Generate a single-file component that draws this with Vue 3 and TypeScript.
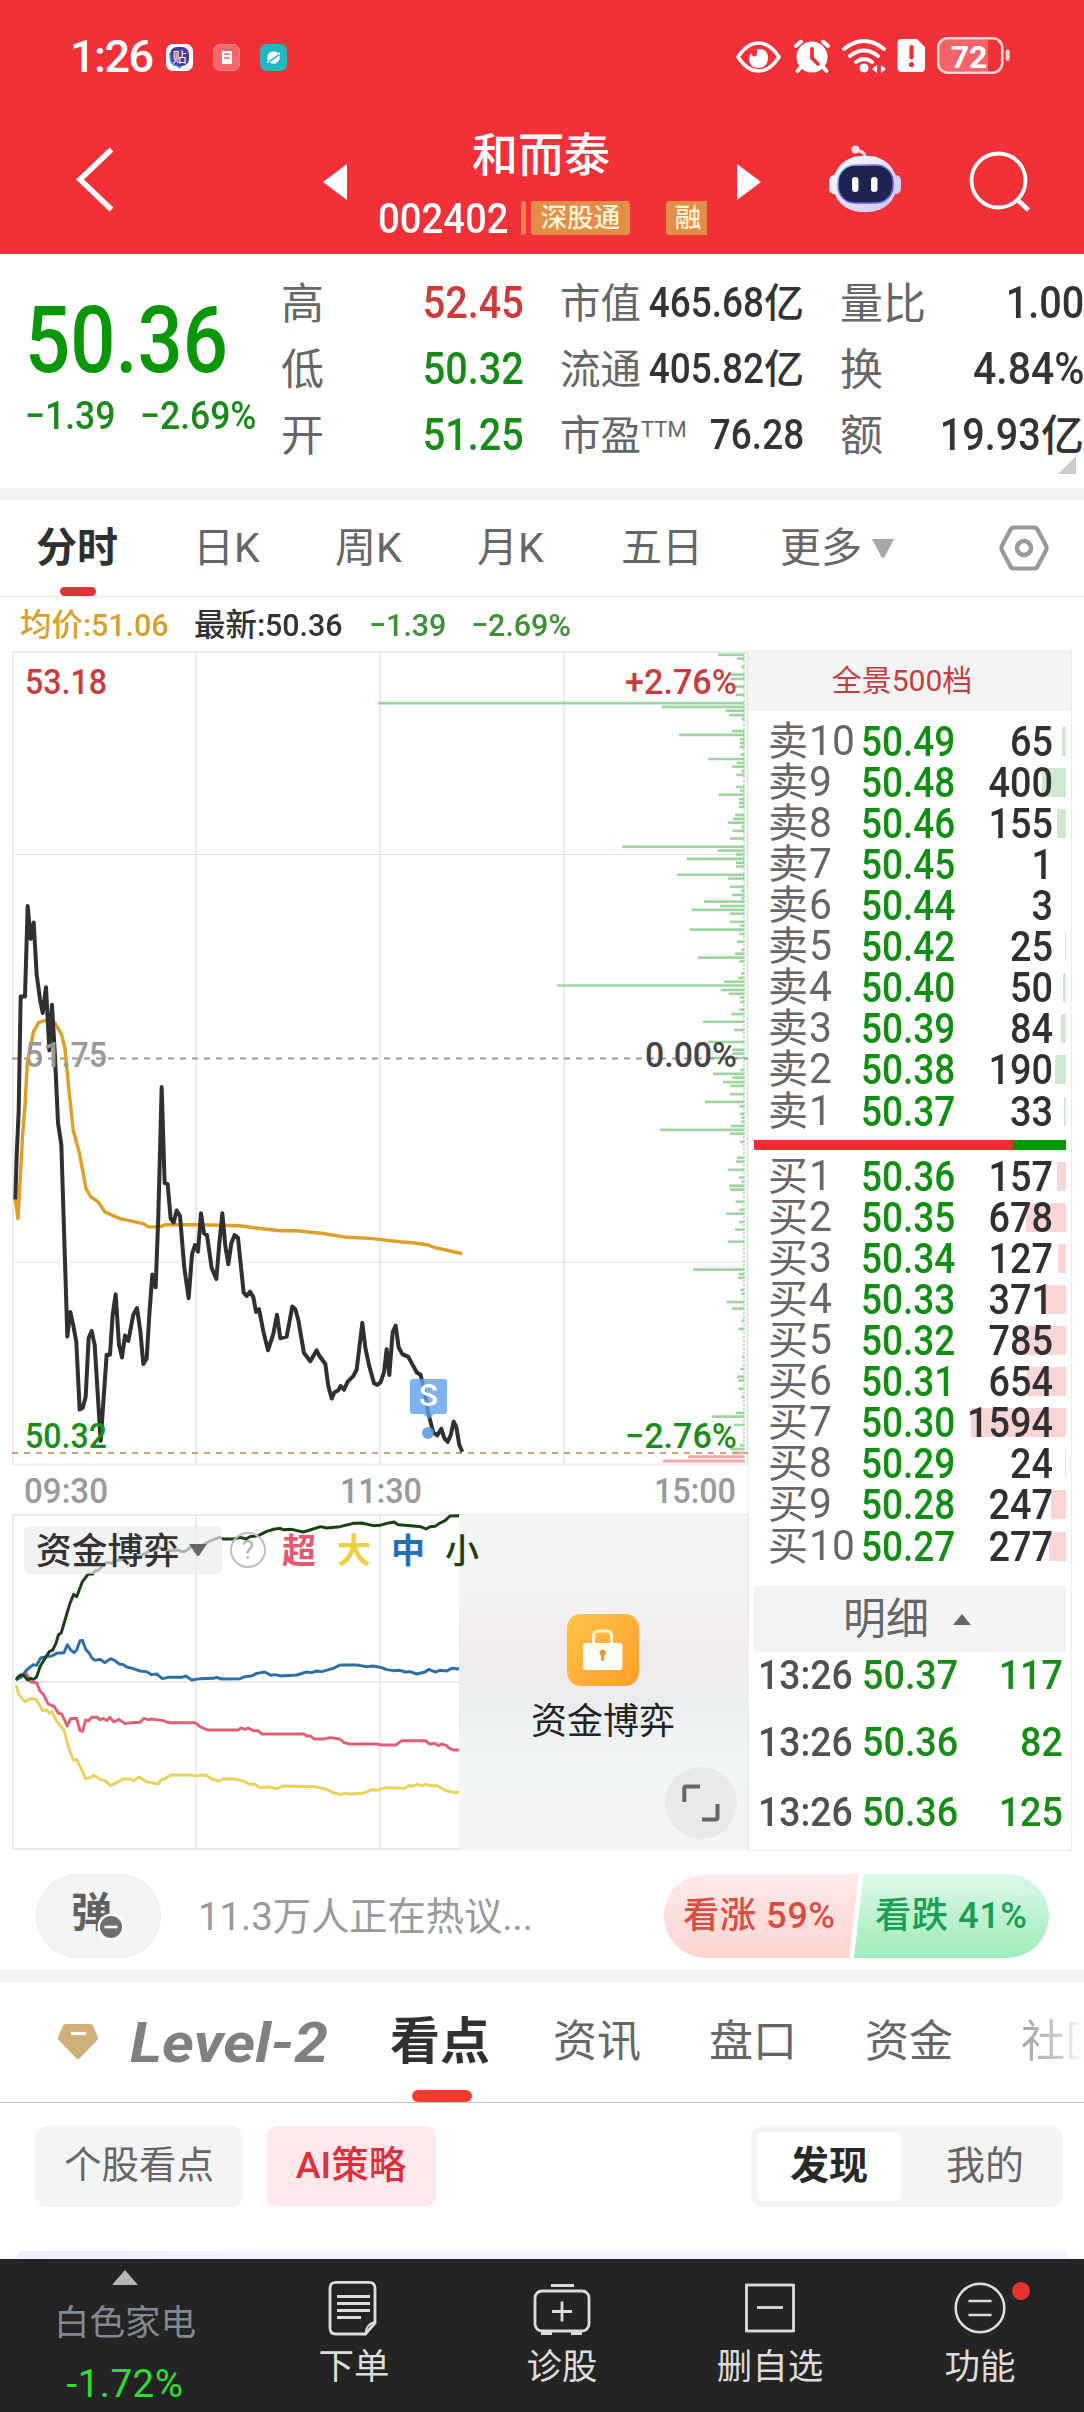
<script setup lang="ts">
interface Level { label: string; price: string; vol: number }
interface Bar { y: number; x: number }

const sells: Level[] = [
  ['卖10', '50.49', 65], ['卖9', '50.48', 400], ['卖8', '50.46', 155], ['卖7', '50.45', 1], ['卖6', '50.44', 3],
  ['卖5', '50.42', 25], ['卖4', '50.40', 50], ['卖3', '50.39', 84], ['卖2', '50.38', 190], ['卖1', '50.37', 33],
].map(([label, price, vol]) => ({ label, price, vol }) as Level)

const buys: Level[] = [
  ['买1', '50.36', 157], ['买2', '50.35', 678], ['买3', '50.34', 127], ['买4', '50.33', 371], ['买5', '50.32', 785],
  ['买6', '50.31', 654], ['买7', '50.30', 1594], ['买8', '50.29', 24], ['买9', '50.28', 247], ['买10', '50.27', 277],
].map(([label, price, vol]) => ({ label, price, vol }) as Level)

const MAX_VOL = 1594
const depth = (v: number): string => `${v < 10 ? 0 : Math.max(1, Math.round((v / MAX_VOL) * 95))}px`

const trades = [
  { t: '13:26', p: '50.37', v: '117' },
  { t: '13:26', p: '50.36', v: '82' },
  { t: '13:26', p: '50.36', v: '125' },
]

// Order-book density bars: y and left edge, all ending at the right axis
const greenBars: Bar[] = ([
  [27, 1074], [34, 1130], [49, 1144], [63, 1110], [71, 1112], [85, 1115], [100, 1128], [115, 54], [122, 905], [129, 1097],
  [137, 1107], [144, 1144], [166, 1116], [173, 957], [181, 1140], [188, 1140], [195, 1138], [209, 1141], [217, 1045],
  [224, 1130], [231, 1116], [239, 1144], [246, 1129], [268, 1128], [275, 1140], [282, 1076], [290, 1137], [297, 1137],
  [304, 1137], [319, 1125], [326, 1119], [333, 1104], [341, 1144], [348, 1117], [362, 1110], [377, 786], [384, 1072],
  [391, 1128], [399, 980], [406, 1128], [413, 1128], [428, 951], [435, 1104], [450, 1110], [457, 1144], [465, 1116],
  [471, 1144], [477, 1032], [485, 1080], [492, 995], [499, 1110], [514, 1110], [521, 1140], [528, 990], [536, 1138],
  [550, 1131], [565, 1144], [572, 1125], [579, 1014], [586, 1138], [608, 1144], [616, 1134], [623, 1092], [630, 591],
  [638, 1083], [645, 1106], [652, 1140], [660, 1140], [674, 1138], [682, 1114], [696, 1029], [711, 1122], [733, 1044],
  [747, 1116], [754, 1116], [762, 1040], [784, 1141], [791, 1059], [798, 1117], [806, 1089], [813, 1110], [828, 1110],
  [842, 1035], [850, 1138], [864, 1140], [871, 1144], [878, 1144], [886, 1113], [893, 900], [900, 1110], [915, 1140],
  [944, 1131], [951, 1128], [966, 1104], [980, 1137], [988, 1144], [995, 1107], [1002, 1110], [1024, 1127], [1039, 1138],
  [1046, 1098], [1061, 1137], [1075, 1125], [1097, 1104], [1148, 999], [1156, 1137], [1163, 1134], [1185, 1141],
  [1192, 1144], [1207, 1100], [1219, 1116], [1241, 1144], [1256, 1135], [1307, 1146], [1329, 1141], [1343, 1131],
  [1350, 1135], [1365, 1135], [1380, 1144], [1409, 1127], [1416, 1056], [1431, 1122], [1468, 1140], [1475, 1110],
] as [number, number][]).map(([y, x]) => ({ y, x }))
const redBars: Bar[] = [{ y: 1482, x: 1120 }, { y: 1489, x: 984 }, { y: 1497, x: 909 }]

const priceLine = '46,1020 50,940 56,860 62,650 75,650 83,485 92,545 101,515 110,610 120,655 128,680 138,633 148,748 156,665 165,760 174,880 184,920 202,1270 211,1225 220,1250 229,1280 239,1403 248,1400 257,1380 266,1272 275,1260 284,1285 302,1460 320,1303 330,1303 338,1230 347,1193 357,1285 366,1308 375,1268 385,1278 400,1230 411,1218 421,1260 430,1320 440,1310 448,1230 457,1157 467,1180 475,1050 485,815 494,990 503,992 512,1055 521,1062 530,1040 540,1050 553,1145 566,1200 576,1120 585,1103 594,1115 603,1045 612,1082 621,1085 635,1145 649,1165 658,1100 667,1045 676,1105 685,1138 694,1100 704,1085 714,1090 731,1190 740,1196 750,1188 760,1198 768,1225 777,1220 790,1260 804,1295 820,1265 831,1230 841,1273 860,1270 877,1215 886,1220 895,1240 912,1300 931,1315 950,1295 958,1305 976,1320 985,1360 995,1383 1003,1372 1015,1368 1022,1360 1032,1367 1043,1352 1060,1342 1070,1330 1078,1290 1087,1245 1096,1290 1107,1322 1122,1355 1132,1358 1142,1353 1152,1335 1160,1293 1168,1340 1178,1262 1187,1250 1196,1290 1207,1302 1225,1307 1250,1335 1262,1340 1275,1375 1285,1410 1300,1445 1312,1450 1324,1438 1333,1455 1343,1462 1352,1450 1361,1425 1369,1435 1378,1468 1387,1480'
const avgLine = '46,1020 54,1055 60,990 68,900 75,850 82,770 92,740 100,715 116,697 135,694 150,693 165,698 185,720 195,745 205,810 220,895 238,935 258,1000 272,1015 295,1025 315,1043 360,1055 430,1064 445,1070 480,1070 495,1066 600,1066 720,1068 780,1073 840,1077 890,1077 970,1082 1040,1089 1110,1091 1200,1097 1240,1099 1285,1103 1305,1108 1330,1111 1387,1119'

const fundLines = [
  { c: '#e8d25a', p: '48,555 56,583 75,605 92,596 108,598 128,632 140,630 148,640 156,635 170,664 192,690 205,740 220,780 230,778 257,836 268,834 282,826 300,838 315,842 332,857 350,848 368,837 390,837 402,842 418,831 438,845 475,852 483,840 495,836 512,825 570,825 585,828 605,825 620,826 635,837 657,843 670,836 705,837 735,845 748,853 765,853 778,863 805,861 830,866 850,858 945,860 980,868 1000,878 1022,884 1035,880 1050,882 1090,880 1115,869 1135,870 1155,863 1215,865 1225,857 1240,858 1252,853 1265,857 1278,853 1290,857 1312,857 1330,868 1345,874 1368,878 1378,875' },
  { c: '#df6074', p: '62,525 80,522 92,546 110,548 120,573 130,583 145,612 163,620 175,640 185,642 202,678 212,656 230,655 240,692 248,694 257,660 265,663 275,652 292,652 300,660 310,655 320,662 330,652 342,666 357,658 375,671 395,668 420,667 432,655 445,659 455,657 490,662 505,668 585,668 600,680 622,690 715,690 722,684 735,688 745,684 760,692 775,692 785,702 912,702 920,708 932,708 942,717 970,717 990,713 1020,717 1032,728 1050,732 1130,732 1145,735 1188,735 1205,722 1278,722 1288,732 1305,730 1315,737 1325,732 1338,736 1350,746 1360,750 1378,750' },
  { c: '#2c6fa8', p: '48,540 65,530 80,510 100,494 110,496 122,474 140,470 155,468 170,460 192,458 202,434 212,450 222,458 230,450 240,422 247,421 257,448 268,460 275,473 285,481 300,478 315,488 332,476 345,482 358,492 370,494 380,501 400,506 420,513 440,515 455,524 470,522 487,536 505,532 545,532 558,528 575,540 600,536 640,535 650,532 665,537 720,536 735,530 755,528 770,520 795,516 812,526 825,524 845,528 890,525 920,516 935,518 950,513 965,515 1000,505 1020,495 1070,495 1100,500 1120,498 1145,503 1160,509 1180,512 1200,511 1215,516 1230,515 1250,522 1275,516 1287,508 1305,516 1320,511 1340,513 1355,505 1378,507' },
  { c: '#17420f', p: '48,540 55,530 62,525 72,527 83,540 92,535 102,538 110,530 120,500 135,475 148,455 158,450 168,430 175,405 184,398 195,360 210,310 221,283 230,290 247,245 265,222 278,222 285,213 295,211 305,200 320,187 335,190 345,182 375,178 400,172 425,166 445,155 480,142 510,152 530,150 552,156 575,140 600,140 630,123 658,112 670,117 700,117 720,112 738,117 750,110 775,107 800,94 825,87 840,85 850,89 875,88 910,96 930,90 962,80 980,84 1020,80 1060,70 1085,69 1120,77 1140,76 1160,70 1182,66 1195,74 1240,78 1262,80 1278,87 1290,80 1305,79 1318,70 1335,62 1350,48 1378,47' },
]
</script>

<template>
  <div class="page">
    <header class="head">
      <div class="status">
        <span class="clock">1:26</span>
        <svg class="apps" width="121" height="27" viewBox="0 0 121 27">
          <rect width="27" height="27" rx="7" fill="#fff" />
          <rect x="4" y="3" width="19" height="19" rx="7" fill="#4a3aa0" />
          <path d="M11 22l2.500 3 2.500-3z" fill="#3c8fe0" />
          <path d="M4 9q0 12 8 13" stroke="#2f8bd8" stroke-width="1.500" fill="none" />
          <text x="13.500" y="17.500" font-size="14" text-anchor="middle" fill="#fff" class="cjk">贴</text>
          <rect x="47.500" y=".5" width="26" height="26" rx="6.500" fill="#f2686b" stroke="#f58588" />
          <path d="M56 7h10v13h-10z" fill="#fff" />
          <path d="M58 10h6M58 14h6" stroke="#f2686b" stroke-width="1.300" />
          <rect x="94" width="27" height="27" rx="7" fill="#1fb8bf" />
          <circle cx="107.500" cy="13.500" r="6.200" fill="#fff" />
          <path d="M101 18q7-2 13-9" stroke="#1fb8bf" stroke-width="1.500" fill="none" />
          <path d="M101 18l2-1M114 9l-2 1" stroke="#fff" stroke-width="1.500" />
        </svg>
        <svg class="sys" width="276" height="40" viewBox="735 35 276 40" fill="none" stroke="#fff">
          <path d="M738 57q9-14 20.500-14t20.500 14q-9 14-20.500 14t-20.500-14z" stroke-width="3.600" stroke-linejoin="round" />
          <path d="M757 49q11-1 11 9 0 9-9 10-9 0-10-8 0-4 2-7 1 4 4 3.500 3-1 2-7.500z" fill="#fff" stroke="none" />
          <circle cx="812" cy="57" r="15.500" fill="#fff" stroke="none" />
          <path d="M796 46l5-4.500M828 46l-5-4.500" stroke-width="4" stroke-linecap="round" />
          <path d="M801 67l-3.500 4M823 67l3.500 4" stroke-width="4" stroke-linecap="round" />
          <path d="M812 49v9l6 6" stroke="#f13037" stroke-width="3.800" stroke-linecap="round" />
          <path d="M844 49q20-16 40 0M850 56q14-11 28 0M856 62q8-6 16 0" stroke-width="3.800" stroke-linecap="round" />
          <circle cx="864" cy="68" r="4.500" fill="#fff" stroke="none" />
          <path d="M876.500 66v6l-3.500-3zM881.500 66v6l3.500-3z" fill="#fff" stroke="#fff" stroke-width="1.200" />
          <path d="M901 39h16l8 8v21a4 4 0 0 1-4 4h-20a3.500 3.500 0 0 1-3.500-4V43a4 4 0 0 1 3.500-4z" fill="#fff" stroke="none" />
          <path d="M911.500 47v10.500" stroke="#f13037" stroke-width="4.200" stroke-linecap="round" />
          <circle cx="911.500" cy="64.500" r="2.600" fill="#f13037" stroke="none" />
          <path d="M988 39.500H948q-8.500 0-8.500 8.500v15q0 8.500 8.500 8.500h40z" fill="#f46468" stroke="none" />
          <rect x="938.200" y="38.200" width="64" height="34.500" rx="9.500" stroke="#ffd9da" stroke-width="2.600" />
          <path d="M1007.700 51.500v7.500" stroke="#ffd9da" stroke-width="4" stroke-linecap="round" />
          <text x="969" y="67.500" text-anchor="middle" font-size="32" font-weight="700" fill="#fff" stroke="none" class="num">72</text>
        </svg>
      </div>
      <div class="nav">
        <svg class="back" width="40" height="68" viewBox="76 146 40 68"><path d="M111.500 149.500L80 179.500l31.500 30" fill="none" stroke="#fff" stroke-width="5.500" /></svg>
        <svg class="prev" width="24" height="36"><path d="M24 0v36L0 18z" fill="#fff" /></svg>
        <div class="title">
          <div class="name">和而泰</div>
          <div class="sub">
            <span class="code n">002402</span>
            <i class="sliver"></i>
            <span class="tag">深股通</span>
            <span class="tag short">融</span>
          </div>
        </div>
        <svg class="next" width="24" height="36"><path d="M0 0v36l24-18z" fill="#fff" /></svg>
        <svg class="robot" width="74" height="68" viewBox="828 145 74 68">
          <defs>
            <linearGradient id="hd" x1="0" y1="0" x2="1" y2="1"><stop offset="0" stop-color="#fff" /><stop offset="1" stop-color="#c9c4f4" /></linearGradient>
            <linearGradient id="rim" x1="0" y1="0" x2="1" y2="1"><stop offset="0" stop-color="#9fe3f5" /><stop offset=".5" stop-color="#7a3fe0" /><stop offset="1" stop-color="#6f6bff" /></linearGradient>
          </defs>
          <path d="M857 151q9-1 9 12" fill="none" stroke="#ead9f2" stroke-width="3" />
          <circle cx="855.500" cy="149.500" r="4" fill="#f6e3ee" />
          <rect x="829" y="175" width="12" height="19" rx="5.500" fill="#f3ecfa" />
          <rect x="889" y="175" width="12" height="19" rx="5.500" fill="#d8d0f3" />
          <rect x="833" y="156" width="64" height="56" rx="28" fill="url(#hd)" />
          <rect x="838" y="165" width="55" height="38" rx="17" fill="#1b2550" stroke="url(#rim)" stroke-width="1.500" />
          <rect x="852" y="177" width="6.500" height="15" rx="3.200" fill="#fff" /><rect x="871" y="177" width="6.500" height="15" rx="3.200" fill="#fff" />
        </svg>
        <svg class="search" width="62" height="62" viewBox="969 151 62 62" fill="none" stroke="#fff" stroke-width="3.800"><circle cx="998.500" cy="180.500" r="27" /><path d="M1017 199.500l11.500 10.500" stroke-width="4.500" /></svg>
      </div>
    </header>

    <section class="quote">
      <div class="last">
        <div class="big n">50.36</div>
        <div class="chg"><span class="n">−1.39</span><span class="n">−2.69%</span></div>
      </div>
      <div class="stat c1">
        <div><label>高</label><b class="n red">52.45</b></div>
        <div><label>低</label><b class="n green">50.32</b></div>
        <div><label>开</label><b class="n green">51.25</b></div>
      </div>
      <div class="stat c2">
        <div><label>市值</label><b class="n">465.68</b><b class="yi">亿</b></div>
        <div><label>流通</label><b class="n">405.82</b><b class="yi">亿</b></div>
        <div><label>市盈<sup>TTM</sup></label><b class="n">76.28</b></div>
      </div>
      <div class="stat c3">
        <div><label>量比</label><b class="n">1.00</b></div>
        <div><label>换</label><b class="n pct">4.84%</b></div>
        <div><label>额</label><b class="n">19.93</b><b class="yi">亿</b></div>
      </div>
      <svg class="corner" width="18" height="18"><path d="M18 0v18H0z" fill="#ccc" /></svg>
    </section>

    <div class="band"></div>

    <nav class="periods">
      <span class="on">分时</span><span class="p2">日K</span><span class="p3">周K</span><span class="p4">月K</span><span class="p5">五日</span><span class="p6">更多</span>
      <svg class="caret" width="22" height="19"><path d="M0 0h22L12.500 18q-1.500 2-3 0z" fill="#a8a8a8" /></svg>
      <svg class="hex" width="50" height="48" viewBox="999 524 50 48" fill="none" stroke="#999" stroke-width="4.200" stroke-linejoin="round"><path d="M1013.500 527.500h21q2 0 3 2l8.500 16q1 2.500 0 5l-8.500 16q-1 2-3 2h-21q-2 0-3-2l-8.500-16q-1-2.500 0-5l8.500-16q1-2 3-2z" /><circle cx="1024" cy="548" r="7" stroke-width="4.500" /></svg>
    </nav>

    <div class="info">
      <span class="avg">均价:<i class="n">51.06</i></span>
      <span class="new">最新:<i class="n">50.36</i></span>
      <i class="n d1">−1.39</i>
      <i class="n d2">−2.69%</i>
    </div>

    <section class="main">
      <svg class="charts" width="749" height="1207" viewBox="0 645 749 1207">
        <defs>
          <linearGradient id="fog" x1="0" y1="0" x2="0" y2="1">
            <stop offset="0" stop-color="#f5f5f5" /><stop offset=".22" stop-color="#f4f3f4" /><stop offset=".42" stop-color="#f1eaec" />
            <stop offset=".55" stop-color="#e9edee" /><stop offset=".74" stop-color="#f2f6f7" /><stop offset="1" stop-color="#f5f3f6" />
          </linearGradient>
          <linearGradient id="gold" x1="0" y1="0" x2="1" y2="1"><stop offset="0" stop-color="#ffc548" /><stop offset="1" stop-color="#ff9d2a" /></linearGradient>
        </defs>
        <g stroke="#ebebeb" stroke-width="2" fill="none">
          <path d="M13 652V1465M196 652V1465M380 652V1465M564 652V1465M747 652V1465" />
          <path d="M12 652H748M12 1464.500H748" /><path d="M12 854.500H748M12 1262H748" stroke-width="1" stroke="#e2e2e2" />
          <path d="M13 1515V1850M196 1515V1850M380 1515V1850M12 1515H748M12 1682H748M12 1849H748M747 1515V1850" />
        </g>
        <path d="M744 652V1464" stroke="#bfe3c0" stroke-width="2" stroke-dasharray="2.500 1.500" />
        <g transform="translate(360 640) scale(.33333 .5485)">
          <path v-for="b in greenBars" :key="b.y" :d="`M${b.x} ${b.y}H1153`" stroke="#9dd59f" stroke-width="4.800" />
          <path v-for="b in redBars" :key="b.y" :d="`M${b.x} ${b.y}H1153`" stroke="#f2a9a9" stroke-width="5.500" />
        </g>
        <path d="M12 1058.500H748" stroke="#999" stroke-width="2" stroke-dasharray="6 6" />
        <path d="M12 1453H748" stroke="#c1a37e" stroke-width="2" stroke-dasharray="6 6" />
        <g transform="translate(0 640) scale(.33333 .5485)" fill="none" stroke-linejoin="round">
          <polyline :points="avgLine" stroke="#dd9f26" stroke-width="3.400" vector-effect="non-scaling-stroke" />
          <polyline :points="priceLine" stroke="#303030" stroke-width="4" vector-effect="non-scaling-stroke" />
        </g>
        <g class="num axis">
          <text x="25" y="694" textLength="82" lengthAdjust="spacingAndGlyphs" fill="#c93c3c">53.18</text>
          <text x="25" y="1067" textLength="82" lengthAdjust="spacingAndGlyphs" fill="#999">51.75</text>
          <text x="25" y="1448" textLength="82" lengthAdjust="spacingAndGlyphs" fill="#1a8c1a">50.32</text>
          <text x="625" y="694" textLength="112" lengthAdjust="spacingAndGlyphs" fill="#c93c3c">+2.76%</text>
          <text x="645" y="1067" textLength="92" lengthAdjust="spacingAndGlyphs" fill="#444">0.00%</text>
          <text x="625" y="1448" textLength="112" lengthAdjust="spacingAndGlyphs" fill="#1a8c1a">−2.76%</text>
          <text x="24" y="1502.500" textLength="84" lengthAdjust="spacingAndGlyphs" fill="#999">09:30</text>
          <text x="340" y="1502.500" textLength="82" lengthAdjust="spacingAndGlyphs" fill="#999">11:30</text>
          <text x="654" y="1502.500" textLength="82" lengthAdjust="spacingAndGlyphs" fill="#999">15:00</text>
        </g>
        <path d="M413 1379h31q3 0 3 3v29q0 3-3 3h-10l-5 5-6-5h-10q-3 0-3-3v-29q0-3 3-3z" fill="#5f9fee" opacity=".8" />
        <circle cx="428" cy="1433" r="6" fill="#5a9bec" opacity=".9" />
        <text x="428.500" y="1406" font-size="31" font-weight="500" text-anchor="middle" fill="#fff" class="num">S</text>

        <g transform="translate(0 1500) scale(.33333)" fill="none" stroke-linejoin="round">
          <polyline v-for="l in fundLines" :key="l.c" :points="l.p" :stroke="l.c" stroke-width="8.800" />
        </g>
        <rect x="459" y="1515" width="288" height="335" fill="url(#fog)" />
        <rect x="24" y="1526" width="198" height="48" rx="6" fill="#ececec" opacity=".7" />
        <g class="cjk" font-weight="500">
          <text x="36" y="1563.500" font-size="35.800" fill="#333">资金博弈</text>
          <text x="282" y="1563" font-size="34" font-weight="700" fill="#e5596b">超</text>
          <text x="337" y="1563" font-size="34" font-weight="700" fill="#ecd03f">大</text>
          <text x="391" y="1563" font-size="34" font-weight="700" fill="#216fb5">中</text>
          <text x="445" y="1563" font-size="34" fill="#17420f">小</text>
        </g>
        <path d="M189 1544h18l-7.500 11q-1.500 2-3 0z" fill="#666" />
        <circle cx="248" cy="1550" r="17" fill="none" stroke="#bdbdbd" stroke-width="2" />
        <text x="248" y="1559" font-size="26" text-anchor="middle" fill="#b5b5b5" class="num">?</text>
        <rect x="567" y="1614" width="72" height="72" rx="14" fill="url(#gold)" />
        <path d="M593.500 1645v-9q0-5 5-5h8q5 0 5 5v9" fill="none" stroke="#fff3cf" stroke-width="3.200" />
        <rect x="583" y="1643" width="39.500" height="27" rx="3" fill="#fffdf8" />
        <path d="M602.700 1649.500a3.400 3.400 0 0 1 1.700 6.300v4.500q-1.700 1.500-3.400 0v-4.500a3.400 3.400 0 0 1 1.700-6.300z" fill="#e6a23a" />
        <text x="531" y="1733.500" font-size="36" fill="#222" class="cjk">资金博弈</text>
        <circle cx="701" cy="1803" r="36" fill="#e9e9e9" />
        <path d="M684.300 1802v-13.500q0-2 2-2H700M702 1819.500h13.500q2 0 2-2V1804" fill="none" stroke="#666" stroke-width="4" />
      </svg>

      <aside class="book">
        <div class="panorama">全景500档</div>
        <div class="levels sell">
          <div v-for="r in sells" :key="r.label" class="row">
            <i class="depth" :style="{ width: depth(r.vol) }"></i>
            <span class="lb">{{ r.label.slice(0, 1) }}<em class="n">{{ r.label.slice(1) }}</em></span>
            <span class="pr n">{{ r.price }}</span><span class="vo n">{{ r.vol }}</span>
          </div>
        </div>
        <div class="ratio"><i></i></div>
        <div class="levels buy">
          <div v-for="r in buys" :key="r.label" class="row">
            <i class="depth" :style="{ width: depth(r.vol) }"></i>
            <span class="lb">{{ r.label.slice(0, 1) }}<em class="n">{{ r.label.slice(1) }}</em></span>
            <span class="pr n">{{ r.price }}</span><span class="vo n">{{ r.vol }}</span>
          </div>
        </div>
        <div class="detail">明细<svg width="18" height="11"><path d="M9 0l9 11H0z" fill="#666" /></svg></div>
        <div v-for="(t, i) in trades" :key="i" class="trade" :class="'t' + i">
          <span class="tm n">{{ t.t }}</span><span class="tp n">{{ t.p }}</span><span class="tv n">{{ t.v }}</span>
        </div>
      </aside>
    </section>

    <section class="talk">
      <div class="danmu">
        弹
        <svg width="28" height="28"><circle cx="14" cy="14" r="13.500" fill="#fff" /><circle cx="14" cy="14" r="11" fill="#707070" /><path d="M7.500 14h13" stroke="#fff" stroke-width="2.600" /></svg>
      </div>
      <div class="hot">11.3万人正在热议...</div>
      <div class="vote">
        <svg width="385" height="84" viewBox="0 0 385 84">
          <defs>
            <linearGradient id="up" x1="0" y1="0" x2="0" y2="1"><stop offset="0" stop-color="#feeae8" /><stop offset="1" stop-color="#fdd4cf" /></linearGradient>
            <linearGradient id="dn" x1="0" y1="0" x2="0" y2="1"><stop offset="0" stop-color="#dcf9e7" /><stop offset="1" stop-color="#9eecbd" /></linearGradient>
          </defs>
          <path d="M42 0H194.500L185 84H42A42 42 0 0 1 42 0z" fill="url(#up)" />
          <path d="M199.500 0H343A42 42 0 0 1 343 84H190z" fill="url(#dn)" />
        </svg>
        <span class="v1">看涨 59%</span><span class="v2">看跌 41%</span>
      </div>
    </section>

    <div class="band b2"></div>

    <nav class="tabs">
      <svg class="gem" width="42" height="37" viewBox="0 0 42 37"><path d="M9 1h24q2 0 3 1.500l5 12q.5 1.500-.8 2.800L23 35q-2 1.800-4 0L1.800 17.300Q.5 16 1 14.500l5-12Q7 1 9 1z" fill="#d2b079" /><path d="M14 10.500h15" stroke="#fff" stroke-width="3.200" /></svg>
      <span class="lv"><i>Level-2</i></span>
      <span class="cur">看点</span><span class="q2">资讯</span><span class="q3">盘口</span><span class="q4">资金</span><span class="q5">社区</span>
    </nav>

    <section class="filters">
      <span class="chip">个股看点</span>
      <span class="chip ai">AI策略</span>
      <div class="seg"><span class="sel">发现</span><span>我的</span></div>
    </section>
    <div class="peek"></div>

    <footer class="dock">
      <div class="idx">
        <svg width="26" height="15"><path d="M13 0l13 15H0z" fill="#b5b5b5" /></svg>
        <span>白色家电</span>
        <b class="num">-1.72%</b>
      </div>
      <div class="it i1">
        <svg width="52" height="58" viewBox="0 0 52 58" fill="none" stroke="#dcdcdc" stroke-width="2.800"><path d="M8 3.400h33q6 0 6 6v34.500L37.500 55H8q-6 0-6-6V9.400q0-6 6-6z" /><path d="M47 43q-9 2-9.500 12" stroke-width="2" /><path d="M9 17.500h33M9 24.500h33M9 31.500h33M9 38.500h24" /></svg>
        <span>下单</span>
      </div>
      <div class="it i2">
        <svg width="58" height="58" viewBox="0 0 58 58" fill="none" stroke="#dcdcdc" stroke-width="2.800"><rect x="2" y="12" width="54" height="40" rx="7" /><path d="M18 6.500h23M29 22.500v20M19 32.500h20M8 54.500h11M38 54.500h11" /></svg>
        <span>诊股</span>
      </div>
      <div class="it i3">
        <svg width="50" height="58" viewBox="0 0 50 58" fill="none" stroke="#dcdcdc" stroke-width="2.800"><rect x="1.500" y="6" width="47" height="46" /><path d="M12 28.500h26" /></svg>
        <span>删自选</span>
      </div>
      <div class="it i4">
        <svg width="52" height="58" viewBox="0 0 52 58" fill="none" stroke="#dcdcdc" stroke-width="2.600"><circle cx="26" cy="29" r="24.300" /><path d="M14.500 22h23M14.500 36h23" /></svg>
        <span>功能</span><i class="dot"></i>
      </div>
    </footer>
  </div>
</template>

<style>
body { margin: 0; background: #fff; }
</style>

<style scoped>
.page { width: 1084px; height: 2412px; overflow: hidden; background: #fff; color: #333; font-family: Roboto, "Noto Sans CJK SC", sans-serif; display: flex; flex-direction: column; white-space: nowrap; }
.page > * { flex-shrink: 0; box-sizing: border-box; }
svg { display: block; flex-shrink: 0; }
i, em { font-style: normal; }
.num { font-family: Roboto, sans-serif; }
.cjk { font-family: "Noto Sans CJK SC", sans-serif; }
.n { display: inline-block; font-family: Roboto, sans-serif; transform: scaleX(.88); transform-origin: left center; }
.red { color: #cf3939; }
.green { color: #168c16; }

.head { height: 254px; background: #f13037; color: #fff; }
.status { height: 114px; display: flex; align-items: center; }
.clock { width: 82px; margin-left: 70px; font-size: 45px; font-weight: 500; line-height: 114px; letter-spacing: -1.5px; }
.apps { margin-left: 14px; }
.sys { margin-left: 448px; margin-top: -4px; }
.nav { display: flex; height: 140px; align-items: flex-start; }
.back { margin: 32px 0 0 76px; }
.prev { margin: 50px 0 0 207px; }
.title { width: 390px; display: flex; flex-direction: column; }
.name { height: 80px; line-height: 82px; font-size: 46px; font-weight: 500; padding-left: 125px; }
.sub { display: flex; height: 48px; padding-left: 31px; align-items: center; }
.code { width: 143px; font-size: 43px; font-weight: 500; line-height: 48px; transform: scaleX(.89); }
.sliver { width: 5px; height: 34px; background: #f5824d; border-radius: 0 3px 3px 0; }
.tag { margin-left: 5px; width: 99px; height: 34px; line-height: 33px; text-align: center; font-size: 26.500px; font-weight: 500; color: #fff3d8; background: #e38d49; border-radius: 3px; }
.tag.short { width: 41px; margin-left: 36px; text-indent: 3px; border-radius: 3px 0 0 3px; }
.next { margin-top: 50px; }
.robot { margin: 31px 0 0 67px; }
.search { margin: 37px 0 0 67px; }

.quote { height: 234px; display: flex; position: relative; }
.last { width: 281px; padding-left: 25px; box-sizing: border-box; color: #099609; }
.big { height: 88px; line-height: 88px; margin-top: 43px; font-size: 92px; font-weight: 500; display: block; width: 240px; transform: scaleX(.865); }
.chg { height: 66px; line-height: 66px; margin-top: -2px; font-size: 39px; font-weight: 500; color: #198a19; display: flex; }
.chg .n { width: 115px; transform: scaleX(.91); }
.stat { display: flex; flex-direction: column; padding-top: 16px; }
.stat > div { display: flex; height: 66px; line-height: 62px; align-items: center; justify-content: flex-end; }
.stat label { color: #666; font-size: 43px; margin-right: auto; margin-top: 2px; }
.stat b { font-size: 45px; font-weight: 500; transform-origin: right center; line-height: 66px; margin-left: -24px; }
.stat .yi { line-height: 62px; font-size: 43px; margin-left: 0; margin-top: 2px; }
.c1 { width: 243px; }
.c2 { width: 244px; margin-left: 36px; }
.c2 label { font-size: 40.500px; }
.c2 b { font-size: 42px; }
.c2 .yi { font-size: 40px; }
.c2 sup { display: inline-block; font-size: 22px; vertical-align: 13px; line-height: 1; }
.c3 { width: 244px; margin-left: 36px; }
.c3 .pct { transform: scaleX(.91); }
.corner { position: absolute; right: 8px; bottom: 14px; }

.band { height: 12px; background: #f4f4f4; }
.periods { height: 97px; display: flex; align-items: flex-start; position: relative; border-bottom: 1px solid #e4e4e4; font-size: 41px; line-height: 97px; color: #666; }
.periods .on { width: 160px; padding-left: 36px; box-sizing: border-box; color: #303030; font-weight: 700; position: relative; }
.on::after { content: ""; position: absolute; left: 60px; top: 87px; width: 36px; height: 9px; border-radius: 5px; background: #e13333; }
.p2 { padding-left: 33px; width: 105px; }
.p3 { padding-left: 37px; width: 106px; }
.p4 { padding-left: 36px; width: 107px; }
.p5 { padding-left: 37px; width: 82px; }
.p6 { padding-left: 77px; width: 92px; }
.caret { margin-top: 39px; }
.hex { margin: 24px 0 0 105px; }

.info { height: 48px; display: flex; font-size: 31.500px; font-weight: 500; line-height: 56px; }
.info .n { transform: scaleX(.95); font-size: 32px; }
.avg { width: 174px; padding-left: 20px; }
.info .avg { color: #d99f2b; }
.new { width: 175px; }
.info .d1 { width: 102px; color: #3f8f35; }
.info .d2 { color: #3f8f35; }

.main { height: 1206px; display: flex; }
.charts { margin-right: -1px; }
.axis { font-size: 34.700px; font-weight: 500; }
.book { width: 324px; height: 1201px; margin-top: 5px; box-sizing: border-box; border: 1px solid #ececec; background: #fff; }
.panorama { height: 60px; line-height: 60px; background: #f4f4f4; text-align: center; text-indent: -16px; font-size: 30px; color: #c73c3c; }
.levels { position: relative; }
.sell { margin-top: 10px; height: 419px; }
.row { display: flex; height: 41px; line-height: 41px; position: relative; }
.row:last-child { top: 1px; }
.depth { position: absolute; right: 5px; top: 6px; height: 29px; background: #cfe9cf; }
.buy .depth { background: #fad5d5; }
.lb { width: 93px; padding-left: 19px; font-size: 40px; line-height: 39px; color: #666; position: relative; }
.lb em { font-size: 42px; transform: scaleX(.97); margin-left: 1px; }
.pr { width: 92px; font-size: 42px; font-weight: 500; color: #0f8f0f; }
.vo { width: 100px; text-align: right; font-size: 42px; font-weight: 500; color: #303030; transform-origin: right center; }
.row .vo { transform: scaleX(.9); }
.ratio { height: 10px; margin: 0 5px; background: #009900; }
.ratio i { display: block; height: 10px; width: 259px; background: #e83030; }
.buy { margin-top: 6px; height: 430px; }
.detail { margin: 0 5px; height: 66px; line-height: 66px; background: #f4f4f4; color: #666; font-size: 43px; display: flex; align-items: center; padding-left: 89px; }
.detail svg { margin-left: 24px; }
.trade { display: flex; padding-left: 9px; font-size: 41px; }
.trade .tm { width: 104px; color: #505050; font-weight: 500; transform: scaleX(.91); }
.trade .tp { width: 95px; color: #168c16; font-weight: 500; transform: scaleX(.92); }
.trade .tv { width: 106px; text-align: right; color: #168c16; font-weight: 500; transform: scaleX(.92); transform-origin: right center; }
.t0 { height: 46px; line-height: 46px; }
.t1 { height: 86px; line-height: 88px; }
.t2 { height: 56px; line-height: 56px; }

.talk { height: 119px; display: flex; padding-top: 23px; }
.danmu { width: 125px; height: 84px; box-sizing: border-box; margin-left: 36px; border: 1px solid #ececec; border-radius: 42px; background: #f4f4f4; color: #606060; font-size: 41px; font-weight: 700; line-height: 76px; padding-left: 34px; position: relative; }
.danmu svg { position: absolute; left: 60px; top: 38px; }
.hot { width: 466px; margin-left: 37px; font-size: 38.300px; line-height: 85px; color: #999; }
.vote { width: 385px; height: 84px; position: relative; font-size: 36.300px; line-height: 84px; }
.vote svg { position: absolute; left: 0; top: 0; }
.vote span { position: absolute; top: 0; letter-spacing: .5px; font-weight: 500; }
.v1 { left: 19px; color: #db4c44; }
.v2 { left: 211px; color: #1aa052; }

.tabs { height: 121px; display: flex; border-bottom: 1px solid #c4c4c4; line-height: 121px; font-size: 44px; color: #666; }
.gem { margin: 41px 0 0 57px; }
.lv { width: 260px; padding-left: 31px; font-size: 56px; font-weight: 700; color: #808080; line-height: 122px; }
.lv i { display: inline-block; font-style: italic; transform: scaleX(1.09); transform-origin: left center; }
.cur { width: 163px; font-size: 50px; font-weight: 700; color: #303030; position: relative; }
.cur::after { content: ""; position: absolute; left: 22px; top: 108px; width: 60px; height: 12px; border-radius: 6px; background: #fb3a32; }
.q2, .q3, .q4 { width: 156px; }
.q5 { width: 62px; overflow: hidden; -webkit-mask-image: linear-gradient(90deg, rgba(0,0,0,.6), rgba(0,0,0,.35) 60%, transparent); mask-image: linear-gradient(90deg, rgba(0,0,0,.6), rgba(0,0,0,.35) 60%, transparent); }

.filters { height: 148px; display: flex; padding-top: 23px; }
.chip { width: 208px; height: 81px; line-height: 79px; margin-left: 35px; border-radius: 12px; background: #f4f4f4; color: #666; text-align: center; font-size: 37.500px; }
.ai { width: 170px; margin-left: 23px; background: #fee8ea; color: #e02f3c; font-weight: 500; }
.seg { width: 312px; height: 81px; margin-left: 315px; background: #f4f4f4; border-radius: 12px; display: flex; padding: 6px; box-sizing: border-box; font-size: 39px; line-height: 68px; color: #666; text-align: center; }
.seg span { width: 144px; padding-left: 12px; }
.seg .sel { padding: 0; background: #fff; border-radius: 6px; color: #282828; font-weight: 700; }
.peek { height: 8px; margin: 0 16px; border-radius: 16px 16px 0 0; background: linear-gradient(90deg, #f4ebfd, #f3f6fd 25%, #f0f5fe); }

.dock { height: 153px; background: #242424; display: flex; position: relative; }
.idx { width: 250px; display: flex; flex-direction: column; align-items: center; }
.idx svg { margin-top: 11px; }
.idx span { color: #818990; font-size: 35.500px; line-height: 40px; height: 40px; margin-top: 18px; }
.idx b { color: #2ee02e; font-size: 38.500px; font-weight: 400; line-height: 40px; margin-top: 21px; letter-spacing: .5px; }
.it { display: flex; flex-direction: column; align-items: center; width: 208px; position: relative; }
.it svg { margin-top: 20px; }
.it span { color: #dcdcdc; font-size: 35.500px; line-height: 40px; margin-top: 10px; }
.i4 { left: 2px; }
.dot { position: absolute; left: 136px; top: 23px; width: 18px; height: 18px; border-radius: 50%; background: #e83333; }
</style>
